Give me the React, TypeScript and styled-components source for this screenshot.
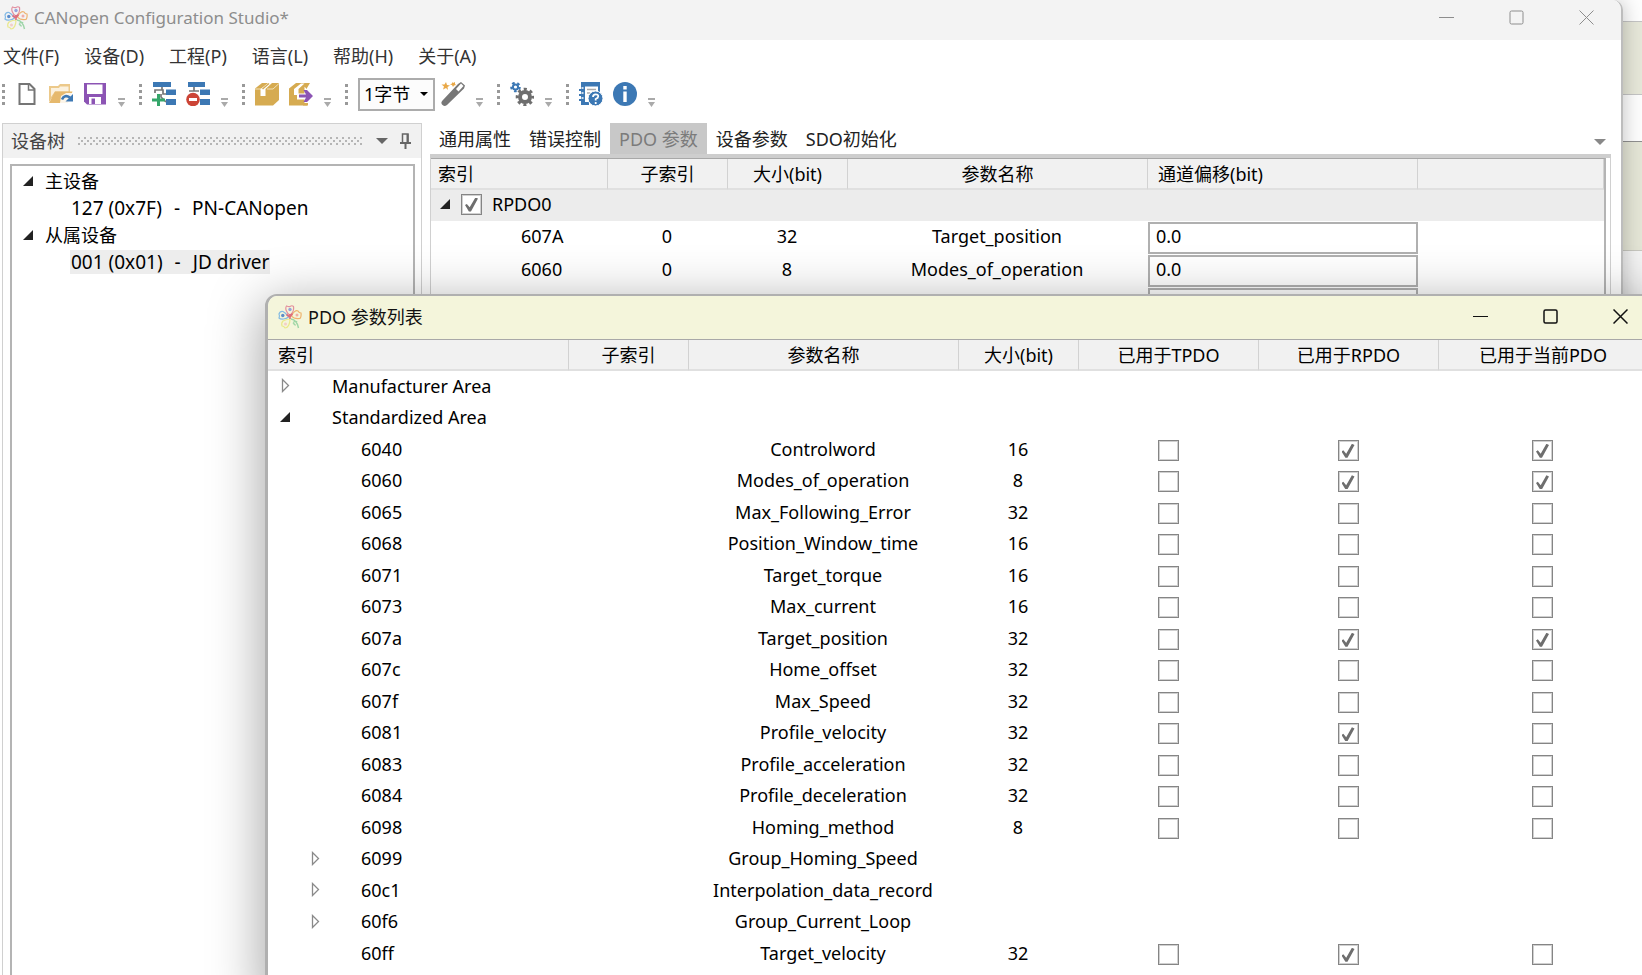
import React from "react";
import styled, { createGlobalStyle } from "styled-components";

const GlobalStyle = createGlobalStyle`
  * { box-sizing: border-box; }
  html, body, #root { height: 100%; }
  body {
    margin: 0;
    overflow: hidden;
    background: #fff;
    color: #000;
    font: 18px/24px "Noto Sans", "Noto Sans CJK SC", sans-serif;
  }
  button, input, select { font: inherit; color: inherit; }
`;

/* ---------- shell ---------- */

const Desktop = styled.div`
  position: relative;
  display: flex;
  height: 100%;
  overflow: hidden;
`;

const MainWindow = styled.section`
  flex: 1;
  min-width: 0;
  display: flex;
  flex-direction: column;
  background: #fff;
  border-right: 2px solid #bdbdbd;
  border-top-right-radius: 10px;
  box-shadow: 0 0 20px rgba(0, 0, 0, 0.25);
  overflow: hidden;
  z-index: 1;
`;

const Backdrop = styled.div`
  width: 19px;
  display: flex;
  flex-direction: column;
  background: #f4f4f4;
`;

const Band = styled.div<{ $h: number; $fill: string; $line: string }>`
  height: ${(p) => p.$h}px;
  background: ${(p) => p.$fill};
  border-bottom: 1px solid ${(p) => p.$line};
`;

const TitleBar = styled.header<{ $active?: boolean }>`
  display: flex;
  align-items: center;
  flex: none;
  height: ${(p) => (p.$active ? 43 : 40)}px;
  padding: 0 0 ${(p) => (p.$active ? 2 : 5)}px ${(p) => (p.$active ? 10 : 4)}px;
  background: ${(p) => (p.$active ? "#f4f5db" : "#f3f3f3")};
  color: ${(p) => (p.$active ? "#111" : "#8d8d8d")};
`;

const Title = styled.h1<{ $size: number }>`
  flex: 1;
  margin: 0 0 0 6px;
  font-size: ${(p) => p.$size}px;
  font-weight: 400;
  white-space: nowrap;
`;

const CaptionButton = styled.button`
  display: grid;
  place-items: center;
  width: 70px;
  height: 35px;
  padding: 0;
  border: 0;
  background: none;
`;

/* ---------- menu and toolbar ---------- */

const MenuBar = styled.nav`
  display: flex;
  gap: 25px;
  height: 33px;
  align-items: center;
  padding: 0 0 2px 3px;
`;

const MenuItem = styled.button`
  padding: 0;
  border: 0;
  background: none;
  color: #333;
  white-space: nowrap;
`;

const ToolBar = styled.div`
  display: flex;
  align-items: center;
  height: 42px;
  padding-left: 2px;
`;

const ToolGroup = styled.div`
  display: flex;
  align-items: center;
  gap: 10px;
  height: 26px;
  margin-right: 13px;
`;

const ToolPair = styled.div`
  display: flex;
  align-items: center;
  gap: 6px;
`;

const Grip = styled.span`
  width: 3px;
  height: 21px;
  background: repeating-linear-gradient(#999 0 3px, transparent 3px 6px);
`;

const ToolButton = styled.button`
  display: block;
  width: 24px;
  height: 24px;
  padding: 0;
  border: 0;
  background: none;
`;

const Overflow = styled.button`
  align-self: flex-end;
  width: 9px;
  height: 9px;
  padding: 0;
  border: 0;
  background: none;
  display: block;
  line-height: 0;
`;

const SelectWrap = styled.label`
  display: flex;
  align-items: center;
  width: 77px;
  height: 33px;
  border: 2px solid #acacac;
  background: #fcfcfc;
`;

const ByteSelect = styled.select`
  appearance: none;
  width: 60px;
  height: 29px;
  padding: 0 0 0 4px;
  border: 0;
  background: none;
`;

/* ---------- docked panels ---------- */

const Workspace = styled.div`
  display: flex;
  flex: 1;
  min-height: 0;
  gap: 8px;
  padding: 8px 10px 0 2px;
`;

const TreePanel = styled.aside`
  display: flex;
  flex-direction: column;
  width: 420px;
  flex: none;
  border: 1px solid #d0d0d0;
  border-bottom: 0;
`;

const PanelHeader = styled.div`
  display: flex;
  align-items: center;
  height: 34px;
  padding: 0 10px 0 8px;
  background: #f1f1f1;
  color: #444;
`;

const DotSvg = styled.svg`
  flex: 1;
  width: 0;
  height: 9px;
  margin: 0 13px;
`;

const IconButton = styled.button`
  display: block;
  padding: 0;
  border: 0;
  background: none;
  line-height: 0;
`;

const TreeBox = styled.div`
  flex: 1;
  margin: 6px 6px 0 7px;
  padding-top: 1px;
  border: 2px solid #b4b4b4;
  border-bottom: 0;
`;

const TreeList = styled.ul<{ $nested?: boolean }>`
  margin: 0;
  padding: 0 0 0 ${(p) => (p.$nested ? 47 : 11)}px;
  list-style: none;
`;

const TreeRow = styled.div`
  display: flex;
  align-items: center;
  gap: 12px;
  height: 27px;
`;

const TreeLeaf = styled.span<{ $selected?: boolean }>`
  display: flex;
  gap: 12px;
  padding: 0 1px;
  background: ${(p) => (p.$selected ? "#ededed" : "none")};
  font-size: 19px;
  white-space: nowrap;
`;

const Editor = styled.main`
  flex: 1;
  min-width: 0;
  display: flex;
  flex-direction: column;
`;

const TabStrip = styled.div`
  display: flex;
  align-items: flex-end;
  border-bottom: 4px solid #cecece;
  height: 35px;
`;

const Tab = styled.button<{ $selected?: boolean }>`
  height: 31px;
  padding: 1px 9px 0;
  border: 0;
  background: ${(p) => (p.$selected ? "#c8c8c8" : "none")};
  color: ${(p) => (p.$selected ? "#7b7b7b" : "#222")};
  white-space: nowrap;
`;

const TabSpacer = styled.span`
  flex: 1;
`;

const TabMenu = styled(IconButton)`
  margin: 0 5px 9px 0;
`;

const EditorFrame = styled.div`
  flex: 1;
  padding-right: 4px;
  border: 1px solid #d0d0d0;
  border-top: 0;
  border-bottom: 0;
`;

const EditorBody = styled.div`
  height: 100%;
  border-top: 1px solid #a8a8a8;
  border-right: 2px solid #b4b4b4;
`;

/* ---------- tables ---------- */

const Table = styled.table`
  width: 100%;
  table-layout: fixed;
  border-collapse: separate;
  border-spacing: 0;
`;

const HeadCell = styled.th<{ $left?: number }>`
  height: 31px;
  padding: 0 0 0 ${(p) => p.$left ?? 0}px;
  border-right: 1px solid #d2d2d2;
  border-bottom: 2px solid #e0e0e0;
  background: #f1f1f1;
  font-weight: 400;
  text-align: ${(p) => (p.$left === undefined ? "center" : "left")};
  white-space: nowrap;
`;

const Cell = styled.td<{ $left?: number }>`
  padding: 0 2px 3px ${(p) => p.$left ?? 0}px;
  text-align: ${(p) => (p.$left === undefined ? "center" : "left")};
  white-space: nowrap;
`;

const InputCell = styled.td`
  padding: 0;
`;

const GroupRow = styled.tr`
  height: 31px;
  background: #ececec;
`;

const MapRow = styled.tr`
  height: 33px;
`;

const ParamRow = styled.tr`
  height: 31px;
  &:nth-child(odd) { height: 32px; }
`;

const Line = styled.div`
  display: flex;
  align-items: center;
`;

const Slot = styled.span<{ $w: number }>`
  flex: none;
  display: flex;
  width: ${(p) => p.$w}px;
`;

const GroupLabel = styled.label`
  display: flex;
  align-items: center;
  gap: 10px;
`;

const Check = styled.input.attrs({ type: "checkbox" })`
  appearance: none;
  display: inline-block;
  vertical-align: middle;
  width: 21px;
  height: 21px;
  margin: 0;
  border: 1px solid #858585;
  box-shadow: inset 0 0 0 1px #d0d0d0;
  background: #fff;
  &:checked::before {
    content: "";
    display: block;
    width: 13px;
    height: 14px;
    margin: 3px;
    background: #6e6e6e;
    clip-path: polygon(0 54%, 14% 46%, 36% 70%, 80% 0, 100% 8%, 46% 100%, 30% 100%);
  }
`;

const OffsetInput = styled.input`
  display: block;
  width: 100%;
  height: 32px;
  padding: 0 0 3px 6px;
  border: 2px solid #b0b0b0;
  background: #fff;
`;

/* ---------- dialog ---------- */

const Dialog = styled.section`
  position: absolute;
  z-index: 2;
  left: 265px;
  top: 294px;
  right: -15px;
  bottom: -20px;
  display: flex;
  flex-direction: column;
  overflow: hidden;
  background: #fff;
  border: 2px solid #b0b0b0;
  border-left-width: 3px;
  border-top-left-radius: 12px;
  box-shadow: 0 12px 52px 4px rgba(0, 0, 0, 0.34);
`;

const DialogBody = styled.div`
  flex: 1;
  padding-right: 7px;
  border-top: 1px solid #a8a8a8;
`;

/* ---------- drawings ---------- */

const Svg = styled.svg`
  display: block;
  flex: none;
`;

const DotGrip = () => (
  <DotSvg aria-hidden="true">
    <defs>
      <pattern id="dots" width="6" height="6" patternUnits="userSpaceOnUse">
        <rect width="2" height="2" fill="#b5b5b5" />
        <rect x="3" y="3" width="2" height="2" fill="#b5b5b5" />
      </pattern>
    </defs>
    <rect width="100%" height="9" fill="url(#dots)" />
  </DotSvg>
);

const Logo = () => (
  <Svg width="24" height="24" viewBox="0 0 24 24" fill="none" strokeWidth="1.2" opacity=".85">
    <path d="M12 10C8 8 7 3 8.500 1Q11 2 12 1.500Q14 0 15.500 1.500C16 5 15 8 12 10Z" stroke="#e07f93" />
    <path d="M10.500 12C8 14 3 15 1 13Q2 11 1 9Q2 6 5 6.500C8 8 9 10 10.500 12Z" stroke="#6fb0e4" />
    <path d="M13.500 11C15 7 18 5 20 6Q21 8 23 8Q23.500 12 22 13.500C18 14 15 13 13.500 11Z" stroke="#eda85a" />
    <path d="M12 14C12 19 10 23 7 23Q6 21 4 21Q3 18 5 16Q9 14 12 14Z" stroke="#e8e67e" />
    <path d="M13 14Q19 15 20.500 23M15 17.500Q18 15.500 19 17M17.500 20.500Q16 18 15 19" stroke="#8fd09c" strokeWidth="1.4" />
    <circle cx="12" cy="4.500" r="1.700" fill="#8597da" />
    <circle cx="4.800" cy="10.500" r="1.700" fill="#3f7bc6" />
    <circle cx="19" cy="10" r="1.500" fill="#f0a09a" />
    <circle cx="7.500" cy="19" r="1.500" fill="#f4c7c2" />
    <path d="M8.500 9.500l4 3M14.500 8.500l-3 4M12 9v5" stroke="#d9566a" strokeWidth="1.600" />
  </Svg>
);

const MinimizeIcon = () => (
  <Svg width="15" height="15" viewBox="0 0 15 15"><path d="M0 7.500h15" stroke="currentColor" /></Svg>
);
const MaximizeIcon = ({ w }: { w: number }) => (
  <Svg width="15" height="15" viewBox="0 0 15 15">
    <rect x="1" y="1" width="13" height="13" rx="1.500" fill="none" stroke="currentColor" strokeWidth={w} />
  </Svg>
);
const CloseIcon = ({ w }: { w: number }) => (
  <Svg width="15" height="15" viewBox="0 0 15 15">
    <path d="M.5.5l14 14M14.500.5l-14 14" stroke="currentColor" strokeWidth={w} />
  </Svg>
);

const Caption = ({ w }: { w: number }) => (
  <>
    <CaptionButton aria-label="最小化"><MinimizeIcon /></CaptionButton>
    <CaptionButton aria-label="最大化"><MaximizeIcon w={w} /></CaptionButton>
    <CaptionButton aria-label="关闭"><CloseIcon w={w} /></CaptionButton>
  </>
);

const OpenArrow = () => (
  <Svg width="10" height="10" viewBox="0 0 10 10"><path d="M10 0v10H0z" fill="#222" /></Svg>
);
const ClosedArrow = () => (
  <Svg width="9" height="15" viewBox="0 0 9 15">
    <path d="M1.500 1.500v12l6-6z" fill="#fff" stroke="#8a8a8a" strokeWidth="1.300" />
  </Svg>
);
const DownArrow = ({ fill = "#777" }: { fill?: string }) => (
  <Svg width="12" height="6" viewBox="0 0 12 6"><path d="M0 0h12L6 6z" fill={fill} /></Svg>
);

const icons: Record<string, React.ReactNode> = {
  新建: (
    <>
      <path d="M4.500 2h10l5 5V22H4.500z" fill="#fff" stroke="#757575" strokeWidth="2" />
      <path d="M13.500 2v6H19" fill="none" stroke="#757575" strokeWidth="1.500" />
    </>
  ),
  打开: (
    <>
      <path d="M0 20V4h9l2-2h10v8H7L0 20z" fill="#ecc98a" />
      <path d="M11 4.500h8.500V9.500H6L2 15V6h8z" fill="#fbf1de" />
      <path d="M6 9.500h17.500L19 21H0z" fill="#e6b96d" />
      <path d="M11 21l1-7 5-3h7v11H11z" fill="#fff" opacity=".85" />
      <path d="M13 17.500Q15.500 12 21 15.500" fill="none" stroke="#3e79b4" strokeWidth="2.600" />
      <path d="M24 12v7.500h-7.500z" fill="#3e79b4" />
    </>
  ),
  保存: (
    <>
      <path d="M1 1h22v21.500H4l-3-3z" fill="#8c54b4" />
      <path d="M4 2.500h15.500v9.500H4zM6 15h12v7H6z" fill="#fff" />
      <path d="M8.500 16.500H12V22H8.500z" fill="#8c54b4" />
    </>
  ),
  添加设备: (
    <>
      <path d="M1 0h18v5H1zM14 7.500h10V13H14zM14 17h10v6H14z" fill="#3c78b4" />
      <path d="M10 5v3M3 11V8h8v4h3M9 12v3l5 5" fill="none" stroke="#777" strokeWidth="1.700" />
      <path d="M6.500 12v12M0 18h13" stroke="#35a66a" strokeWidth="3" />
    </>
  ),
  删除设备: (
    <>
      <path d="M2 0h17v5H2zM14 7.500h10V13H14zM14 17h10v6H14z" fill="#3c78b4" />
      <path d="M8 5v4M3 9h10" fill="none" stroke="#777" strokeWidth="1.700" />
      <circle cx="7" cy="17.500" r="6.800" fill="#cc4436" />
      <path d="M3 17.500h8" stroke="#fff" strokeWidth="3" />
    </>
  ),
  打包: (
    <>
      <path d="M0 6.500L7 1h17v17l-6 5.500H0z" fill="#d6ab51" />
      <path d="M0 7h6M12 7h6L24 1.500" fill="none" stroke="#f1e0b8" />
      <path d="M5.500 7L13 1h4l-6.500 6v7h-5z" fill="#fff" />
      <path d="M7.500 7l6.500-5.500" stroke="#d6ab51" strokeWidth="1.500" />
    </>
  ),
  导出: (
    <>
      <path d="M0 6.500L7 1h14l-3 5v17.500H0z" fill="#d6ab51" />
      <path d="M5 7l7-5.500h3.500l-6 5.500v6H5z" fill="#fff" />
      <path d="M9 12.500h7.500V7l7.500 7-7.500 7v-4.500H9z" fill="#fff" stroke="#fff" strokeWidth="2" />
      <path d="M10 12.500h7L14.500 8h3.500l6 6-6 6h-3.500l2.500-4.500h-7z" fill="#8c54b4" />
      <path d="M14 21h5v2.500h-5z" fill="#d6ab51" />
    </>
  ),
  向导: (
    <>
      <path d="M17 2l3-2 4 3.500-1 3L6 23q-3 2-5-.5-1.500-2 .5-4z" fill="#777" />
      <path d="M15 7l5-5.500 2.500 2.500-5 5.500z" fill="#fff" />
      <path d="M5 0l1 3 3 .5-2.500 1.500.5 3-2-2-3 1.500 1-3L.5 2.500h3zM11 0l1 1 2-1v2l1 1-2 .5-1 1.500-1-2-2-.5 2-1z" fill="#e9a847" />
    </>
  ),
  设置: (
    <>
      <circle cx="15" cy="15" r="5" fill="none" stroke="#6e6e6e" strokeWidth="4" />
      <circle cx="15" cy="15" r="7.800" fill="none" stroke="#6e6e6e" strokeWidth="3" strokeDasharray="3.060 3.066" strokeDashoffset="1.500" />
      <circle cx="5.500" cy="5" r="2.600" fill="none" stroke="#3c78b4" strokeWidth="2" />
      <circle cx="5.500" cy="5" r="4.200" fill="none" stroke="#3c78b4" strokeWidth="2.200" strokeDasharray="2.600 2.680" />
    </>
  ),
  手册: (
    <>
      <path d="M2 0h19v10h-2V4.500H6V20h4v3H2v-4H0v-2h2v-3H0v-2h2V9H0V7h2z" fill="#3c78b4" />
      <path d="M8 7.500h9M8 11h3" stroke="#aaa" strokeWidth="1.500" />
      <path d="M2.500 6h2M2.500 11h2M2.500 16h2" stroke="#fff" strokeWidth="1.300" />
      <circle cx="16.500" cy="16.500" r="7.500" fill="#3c78b4" stroke="#fff" />
      <path d="M14 15q0-2.700 2.700-2.700t2.500 2.200q0 1.500-2.500 2.500v1.500M16.700 20v2" fill="none" stroke="#fff" strokeWidth="1.800" />
    </>
  ),
  信息: (
    <>
      <circle cx="12" cy="12" r="12" fill="#3c78b4" />
      <path d="M12 4v3.500M12 9.500V20" stroke="#fff" strokeWidth="3.400" />
    </>
  ),
};

const Tool = ({ name }: { name: string }) => (
  <ToolButton aria-label={name}>
    <Svg width="24" height="24" viewBox="0 0 24 24">{icons[name]}</Svg>
  </ToolButton>
);

const More = () => (
  <Overflow aria-label="更多">
    <Svg width="9" height="9" viewBox="0 0 9 9">
      <path d="M1 0h7v2H1zM1 4h7L4.500 9z" fill="#aaa" />
    </Svg>
  </Overflow>
);

/* ---------- data ---------- */

const menus = ["文件(F)", "设备(D)", "工程(P)", "语言(L)", "帮助(H)", "关于(A)"];
const tabs = ["通用属性", "错误控制", "PDO 参数", "设备参数", "SDO初始化"];
const mapped = [
  ["607A", "0", "32", "Target_position", "0.0"],
  ["6060", "0", "8", "Modes_of_operation", "0.0"],
  ["6040", "0", "16", "Controlword", "0.0"],
];

type Param = { index: string; name: string; bits?: number; rpdo?: boolean; current?: boolean };
const params: Param[] = [
  { index: "6040", name: "Controlword", bits: 16, rpdo: true, current: true },
  { index: "6060", name: "Modes_of_operation", bits: 8, rpdo: true, current: true },
  { index: "6065", name: "Max_Following_Error", bits: 32 },
  { index: "6068", name: "Position_Window_time", bits: 16 },
  { index: "6071", name: "Target_torque", bits: 16 },
  { index: "6073", name: "Max_current", bits: 16 },
  { index: "607a", name: "Target_position", bits: 32, rpdo: true, current: true },
  { index: "607c", name: "Home_offset", bits: 32 },
  { index: "607f", name: "Max_Speed", bits: 32 },
  { index: "6081", name: "Profile_velocity", bits: 32, rpdo: true },
  { index: "6083", name: "Profile_acceleration", bits: 32 },
  { index: "6084", name: "Profile_deceleration", bits: 32 },
  { index: "6098", name: "Homing_method", bits: 8 },
  { index: "6099", name: "Group_Homing_Speed" },
  { index: "60c1", name: "Interpolation_data_record" },
  { index: "60f6", name: "Group_Current_Loop" },
  { index: "60ff", name: "Target_velocity", bits: 32, rpdo: true },
];

const Columns = ({ widths }: { widths: number[] }) => (
  <colgroup>
    {widths.map((w, i) => <col key={i} width={w} />)}
    <col />
  </colgroup>
);

/* ---------- views ---------- */

const Device = ({ id, name, selected }: { id: string; name: string; selected?: boolean }) => (
  <li>
    <TreeRow>
      <TreeLeaf $selected={selected}>
        <span>{id}</span>
        <span>-</span>
        <span>{name}</span>
      </TreeLeaf>
    </TreeRow>
  </li>
);

const DeviceTree = () => (
  <TreePanel>
    <PanelHeader>
      设备树
      <DotGrip />
      <IconButton aria-label="选项"><DownArrow fill="#666" /></IconButton>
      <Slot $w={12} />
      <IconButton aria-label="固定">
        <Svg width="11" height="16" viewBox="0 0 11 16">
          <path d="M2.500 10V1h5.500v9" fill="none" stroke="#666" strokeWidth="1.500" />
          <path d="M7.500 1v9M0 10h11M5.500 10v6" stroke="#666" strokeWidth="2" />
        </Svg>
      </IconButton>
    </PanelHeader>
    <TreeBox>
      <TreeList>
        <li>
          <TreeRow><OpenArrow />主设备</TreeRow>
          <TreeList $nested>
            <Device id="127 (0x7F)" name="PN-CANopen" />
          </TreeList>
        </li>
        <li>
          <TreeRow><OpenArrow />从属设备</TreeRow>
          <TreeList $nested>
            <Device id="001 (0x01)" name="JD driver" selected />
          </TreeList>
        </li>
      </TreeList>
    </TreeBox>
  </TreePanel>
);

const PdoEditor = () => (
  <Editor>
    <TabStrip role="tablist">
      {tabs.map((t, i) => <Tab key={t} role="tab" aria-selected={i === 2} $selected={i === 2}>{t}</Tab>)}
      <TabSpacer />
      <TabMenu aria-label="标签列表"><DownArrow fill="#888" /></TabMenu>
    </TabStrip>
    <EditorFrame>
      <EditorBody>
        <Table>
          <Columns widths={[177, 120, 120, 300, 270]} />
          <thead>
            <tr>
              <HeadCell $left={7}>索引</HeadCell>
              <HeadCell>子索引</HeadCell>
              <HeadCell>大小(bit)</HeadCell>
              <HeadCell>参数名称</HeadCell>
              <HeadCell $left={10}>通道偏移(bit)</HeadCell>
              <HeadCell />
            </tr>
          </thead>
          <tbody>
            <GroupRow>
              <Cell $left={9} colSpan={6}>
                <Line>
                  <Slot $w={21}><OpenArrow /></Slot>
                  <GroupLabel><Check defaultChecked />RPDO0</GroupLabel>
                </Line>
              </Cell>
            </GroupRow>
            {mapped.map(([index, sub, bits, name, offset]) => (
              <MapRow key={index}>
                <Cell $left={90}>{index}</Cell>
                <Cell>{sub}</Cell>
                <Cell>{bits}</Cell>
                <Cell>{name}</Cell>
                <InputCell><OffsetInput aria-label={`${name} 通道偏移`} defaultValue={offset} /></InputCell>
                <Cell />
              </MapRow>
            ))}
          </tbody>
        </Table>
      </EditorBody>
    </EditorFrame>
  </Editor>
);

const ParamDialog = () => (
  <Dialog role="dialog" aria-label="PDO 参数列表">
    <TitleBar $active>
      <Logo />
      <Title as="h2" $size={18}>PDO 参数列表</Title>
      <Caption w={1.5} />
    </TitleBar>
    <DialogBody>
      <Table>
        <Columns widths={[301, 120, 270, 120, 180, 180]} />
        <thead>
          <tr>
            <HeadCell $left={10}>索引</HeadCell>
            <HeadCell>子索引</HeadCell>
            <HeadCell>参数名称</HeadCell>
            <HeadCell>大小(bit)</HeadCell>
            <HeadCell>已用于TPDO</HeadCell>
            <HeadCell>已用于RPDO</HeadCell>
            <HeadCell>已用于当前PDO</HeadCell>
          </tr>
        </thead>
        <tbody>
          <ParamRow>
            <Cell $left={13} colSpan={7}>
              <Line><Slot $w={51}><ClosedArrow /></Slot>Manufacturer Area</Line>
            </Cell>
          </ParamRow>
          <ParamRow>
            <Cell $left={12} colSpan={7}>
              <Line><Slot $w={52}><OpenArrow /></Slot>Standardized Area</Line>
            </Cell>
          </ParamRow>
          {params.map((p) => (
            <ParamRow key={p.index}>
              <Cell $left={43}>
                <Line><Slot $w={50}>{!p.bits && <ClosedArrow />}</Slot>{p.index}</Line>
              </Cell>
              <Cell />
              <Cell>{p.name}</Cell>
              <Cell>{p.bits}</Cell>
              <Cell>{p.bits && <Check aria-label={`${p.name} TPDO`} />}</Cell>
              <Cell>{p.bits && <Check aria-label={`${p.name} RPDO`} defaultChecked={p.rpdo} />}</Cell>
              <Cell>{p.bits && <Check aria-label={`${p.name} 当前PDO`} defaultChecked={p.current} />}</Cell>
            </ParamRow>
          ))}
        </tbody>
      </Table>
    </DialogBody>
  </Dialog>
);

export default function App() {
  return (
    <>
      <GlobalStyle />
      <Desktop>
        <MainWindow>
          <TitleBar>
            <Logo />
            <Title $size={17}>CANopen Configuration Studio*</Title>
            <Caption w={1} />
          </TitleBar>
          <MenuBar>{menus.map((m) => <MenuItem key={m}>{m}</MenuItem>)}</MenuBar>
          <ToolBar role="toolbar">
            <ToolGroup><Grip /><Tool name="新建" /><Tool name="打开" /><Tool name="保存" /><More /></ToolGroup>
            <ToolGroup><Grip /><Tool name="添加设备" /><Tool name="删除设备" /><More /></ToolGroup>
            <ToolGroup><Grip /><Tool name="打包" /><Tool name="导出" /><More /></ToolGroup>
            <ToolGroup>
              <Grip />
              <ToolPair>
                <SelectWrap>
                  <ByteSelect aria-label="字节数" defaultValue="1字节">
                    <option>1字节</option>
                    <option>2字节</option>
                  </ByteSelect>
                  <Svg width="8" height="4" viewBox="0 0 8 4"><path d="M0 0h8L4 4z" /></Svg>
                </SelectWrap>
                <Tool name="向导" />
              </ToolPair>
              <More />
            </ToolGroup>
            <ToolGroup><Grip /><Tool name="设置" /><More /></ToolGroup>
            <ToolGroup><Grip /><Tool name="手册" /><Tool name="信息" /><More /></ToolGroup>
          </ToolBar>
          <Workspace>
            <DeviceTree />
            <PdoEditor />
          </Workspace>
        </MainWindow>
        <Backdrop>
          <Band $h={22} $fill="#fefefe" $line="#c4c4c4" />
          <Band $h={73} $fill="#e6e7d9" $line="#c4c4c4" />
          <Band $h={47} $fill="#fdfdfd" $line="#8f8f8f" />
          <Band $h={109} $fill="#e4e5d6" $line="#c8c8c0" />
        </Backdrop>
        <ParamDialog />
      </Desktop>
    </>
  );
}
